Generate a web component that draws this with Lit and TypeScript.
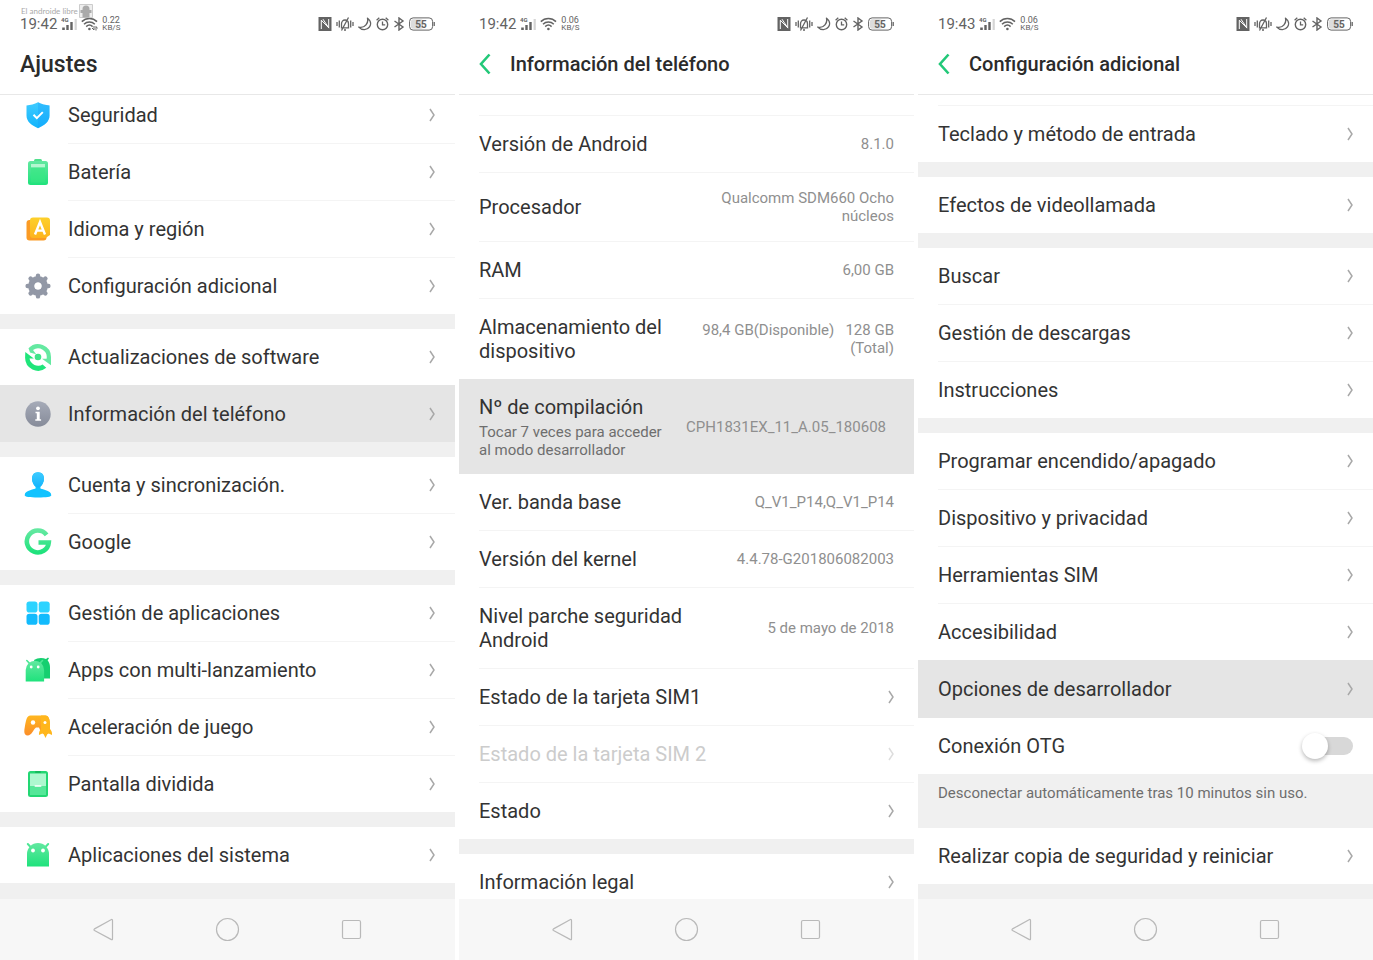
import { LitElement, html, svg, css, nothing } from "lit";
import { customElement, property } from "lit/decorators.js";
import { classMap } from "lit/directives/class-map.js";

type Row = {
  label: string;
  icon?: string;
  value?: string;
  note?: string;
  active?: boolean;
  disabled?: boolean;
  toggle?: boolean;
  inset?: boolean;
};

const settings: Row[][] = [
  [
    { label: "Seguridad", icon: "shield" },
    { label: "Batería", icon: "battery" },
    { label: "Idioma y región", icon: "language" },
    { label: "Configuración adicional", icon: "gear" },
  ],
  [
    { label: "Actualizaciones de software", icon: "update" },
    { label: "Información del teléfono", icon: "info", active: true },
  ],
  [
    { label: "Cuenta y sincronización.", icon: "person" },
    { label: "Google", icon: "google" },
  ],
  [
    { label: "Gestión de aplicaciones", icon: "apps" },
    { label: "Apps con multi-lanzamiento", icon: "clones" },
    { label: "Aceleración de juego", icon: "game" },
    { label: "Pantalla dividida", icon: "split" },
  ],
  [{ label: "Aplicaciones del sistema", icon: "android" }],
];

const phoneInfo: Row[][] = [
  [
    { label: "Versión de Android", value: "8.1.0" },
    { label: "Procesador", value: "Qualcomm SDM660 Ocho núcleos" },
    { label: "RAM", value: "6,00 GB" },
    {
      label: "Almacenamiento del dispositivo",
      value: "98,4 GB(Disponible)\u00a0\u00a0 128\u00a0GB (Total)",
    },
    {
      label: "Nº de compilación",
      note: "Tocar 7 veces para acceder al modo desarrollador",
      value: "CPH1831EX_11_A.05_180608",
      active: true,
      inset: true,
    },
    { label: "Ver. banda base", value: "Q_V1_P14,Q_V1_P14" },
    { label: "Versión del kernel", value: "4.4.78-G201806082003" },
    { label: "Nivel parche seguridad Android", value: "5 de mayo de 2018" },
    { label: "Estado de la tarjeta SIM1" },
    { label: "Estado de la tarjeta SIM 2", disabled: true },
    { label: "Estado" },
  ],
  [{ label: "Información legal" }],
];

const extraTop: Row[][] = [
  [{ label: "Teclado y método de entrada" }],
  [{ label: "Efectos de videollamada" }],
  [
    { label: "Buscar" },
    { label: "Gestión de descargas" },
    { label: "Instrucciones" },
  ],
  [
    { label: "Programar encendido/apagado" },
    { label: "Dispositivo y privacidad" },
    { label: "Herramientas SIM" },
    { label: "Accesibilidad" },
    { label: "Opciones de desarrollador", active: true },
    { label: "Conexión OTG", toggle: true },
  ],
];

const extraBottom: Row[][] = [[{ label: "Realizar copia de seguridad y reiniciar" }]];

const icons: Record<string, unknown> = {
  shield: svg`
    <path d="M14 1.200c3.600 2 7.400 2.900 11.500 3.200v10.200c0 6-4.800 9.800-11.500 12.600C7.300 24.400 2.500 20.600 2.500 14.600V4.400C6.600 4.100 10.400 3.200 14 1.200z" fill="url(#blue)"/>
    <path d="M14 1.200c3.600 2 7.400 2.900 11.500 3.200v10.200c0 6-4.800 9.800-11.500 12.600z" fill="#18a0fb" opacity=".35"/>
    <path d="M9.500 13.800l3.300 3.300 6-6" fill="none" stroke="#fff" stroke-width="2"/>`,
  battery: svg`
    <rect x="10" y="1" width="8" height="5" rx="1.500" fill="#4fe08c"/>
    <rect x="4" y="3" width="20" height="24" rx="2.500" fill="url(#green)"/>
    <rect x="7" y="6" width="14" height="3.500" fill="#b4f7d0"/>
    <rect x="7" y="9.500" width="14" height="15" fill="#3ae884" opacity=".55"/>`,
  language: svg`
    <rect x="2.500" y="5" width="20" height="20.500" rx="3" fill="#fb9b24"/>
    <path d="M9 2.500h14a3 3 0 0 1 3 3V20l-4.500 3H9a3 3 0 0 1-3-3V5.500a3 3 0 0 1 3-3z" fill="url(#yellow)"/>
    <path d="M11 19.500l5-12.500 5 12.500M12.800 15.600h6.400" fill="none" stroke="#fff" stroke-width="2.400"/>`,
  gear: svg`
    <circle cx="14" cy="14" r="6.700" fill="none" stroke="#9298a6" stroke-width="6.400"/>
    <path d="M14 3.600v4M14 20.400v4M3.600 14h4M20.400 14h4M6.600 6.600l3 3M18.400 18.400l3 3M21.400 6.600l-3 3M9.600 18.400l-3 3" stroke="#9298a6" stroke-width="4.400" stroke-linecap="round"/>
    <circle cx="14" cy="14" r="3.500" fill="#fff"/>`,
  update: svg`
    <circle cx="14" cy="14" r="3.300" fill="#3fe48a"/>
    <path d="M4.500 5.200A13 13 0 0 1 27 14v8.300l-9-6.600h4.600A8.700 8.700 0 0 0 9 7.100l3.200 4.200L6 9.600z" fill="#64e9a1"/>
    <path d="M1.300 9L9.800 15.500H5.500A8.700 8.700 0 0 0 18.600 21.400l3.700 3.400A13 13 0 0 1 1.100 14.500z" fill="#1fe57a"/>`,
  info: svg`
    <circle cx="14" cy="14" r="12.700" fill="url(#gray)"/>
    <circle cx="14" cy="8.300" r="1.900" fill="#fff"/>
    <path d="M11.500 11.700h4.200v7.600h1.400v1.500h-5.800v-1.500h1.500v-6h-1.300z" fill="#fff"/>`,
  person: svg`
    <path d="M14 1.200c4 0 6 2.800 6 6.400 0 3.600-1.900 7-3.600 8.200v1.500c0 1.200 10.900 1.500 10.900 6.900 0 1.600-5 2.200-13.300 2.200S.7 25.800.7 24.200c0-5.400 10.900-5.700 10.900-6.900v-1.500C9.900 14.600 8 11.200 8 7.600c0-3.600 2-6.400 6-6.400z" fill="#12c3ff"/>
    <path d="M14 1.200c4 0 6 2.800 6 6.400 0 4.600-3.200 9-6 9s-6-4.400-6-9c0-3.600 2-6.400 6-6.400z" fill="url(#blue)"/>`,
  google: svg`
    <path d="M22.600 6.800A11 11 0 1 0 24.800 14.500H14.500" fill="none" stroke="url(#green)" stroke-width="4.600"/>`,
  apps: svg`
    <rect x="2.500" y="2.500" width="11" height="11" rx="2.800" fill="#2cd3ff"/>
    <rect x="14.700" y="2.500" width="11" height="11" rx="2.800" fill="#2cd3ff"/>
    <rect x="2.500" y="14.700" width="11" height="11" rx="2.800" fill="#12bbfd"/>
    <rect x="14.700" y="14.700" width="11" height="11" rx="2.800" fill="#12bbfd"/>`,
  clones: svg`
    <path d="M10 4c2-1.300 4.500-2 7-2 1.800 0 3.500.3 5 1l2-1.500 1 1-1.400 1.800C25 6 26 8.500 26 11v11.500H14z" fill="#16cf70"/>
    <path d="M2.800 4.500l2.500 2.600M18.500 4.500L16 7.100" stroke="#4de795" stroke-width="1.600" stroke-linecap="round"/>
    <path d="M1.700 25.500V14a9.200 9.200 0 0 1 18.400 0v11.500z" fill="url(#green)"/>
    <circle cx="7.200" cy="11" r="1.400" fill="#fff"/><circle cx="14.200" cy="11" r="1.400" fill="#fff"/>`,
  game: svg`
    <path d="M6.500 2.500h15c3 0 4 3 4.500 8v9H17l-2-5h-3c-3 2.500-4.500 8-8.200 8C0 22.500-.2 19 .8 14 1.900 8 2.500 2.500 6.500 2.500z" fill="url(#orange)"/>
    <path d="M17 2.500h4.500c3 0 4.500 4 4.500 9v4.500c1.500 1.500 2.200 3.500 2 6l-3.200-1.500-1.500.8-1.800 3.700-1.800-3.700-1.500-.8-3.200 1.500c-.2-2.500.5-4.500 2-6z" fill="#ffb61c"/>
    <circle cx="9" cy="9.500" r="2.200" fill="#fff"/><circle cx="21" cy="9.500" r="1.500" fill="#fff"/>`,
  split: svg`
    <rect x="4" y="1" width="20" height="26" rx="2.500" fill="#22d773"/>
    <rect x="6" y="3.500" width="16" height="12.500" fill="#adf8cf"/>
    <rect x="6" y="16" width="16" height="9" fill="#55e798"/>
    <rect x="10.500" y="15.300" width="7" height="1.400" rx=".7" fill="#fff"/>
    <rect x="11" y="1" width="6" height="2" rx="1" fill="#16b95e"/>`,
  android: svg`
    <path d="M3.800 3l3 3.200M24.200 3l-3 3.200" stroke="#4de795" stroke-width="2" stroke-linecap="round"/>
    <path d="M3 25.500V13a11 11 0 0 1 22 0v12.500z" fill="url(#green)"/>
    <circle cx="9" cy="9.500" r="1.900" fill="#fff"/><circle cx="19" cy="9.500" r="1.900" fill="#fff"/>`,
};

const gradient = (id: string, from: string, to: string) => svg`
  <linearGradient id=${id} x1="0" y1="0" x2="0" y2="1">
    <stop offset="0" stop-color=${from}/><stop offset="1" stop-color=${to}/>
  </linearGradient>`;

const rowIcon = (name: string) => html`
  <svg class="icon" viewBox="0 0 28 28" aria-hidden="true">
    <defs>
      ${gradient("blue", "#3fcbff", "#12b4fc")}
      ${gradient("green", "#62e8a0", "#1fe27c")}
      ${gradient("yellow", "#fdd02a", "#fdb41e")}
      ${gradient("orange", "#ffb71f", "#fb8d2a")}
      ${gradient("gray", "#a6abb8", "#868b99")}
    </defs>
    ${icons[name]}
  </svg>`;

@customElement("status-bar")
class StatusBar extends LitElement {
  @property() time = "";
  @property() speed = "";
  @property({ type: Boolean }) transfer = false;

  static styles = css`
    :host {
      display: flex;
      justify-content: space-between;
      align-items: center;
      height: 20px;
      padding: 14px 20px 0;
      color: #636363;
    }
    .side {
      display: flex;
      align-items: center;
      gap: 4px;
    }
    .time {
      font-size: 15px;
      line-height: 20px;
    }
    .speed {
      font-size: 8px;
      line-height: 7px;
    }
    .speed span {
      display: block;
    }
    .rate {
      font-size: 9px;
    }
    svg {
      display: block;
      fill: none;
      stroke: currentColor;
    }
    text {
      fill: currentColor;
      stroke: none;
      font-weight: 700;
    }
  `;

  render() {
    return html`
      <div class="side">
        <span class="time">${this.time}</span>
        <svg width="16" height="14" viewBox="0 0 16 14">
          <text x="0" y="5" font-size="6">4G</text>
          <path d="M2.500 10.500v2.500" stroke-width="2.600" />
          <path d="M6.500 8v5M10.500 5v8" stroke-width="2.400" />
          <path d="M14.700 2v11" stroke="#d5d5d5" stroke-width="2.200" />
        </svg>
        <svg width="17" height="14" viewBox="0 0 17 14">
          <path d="M.8 4.600c4.200-4.200 11-4.200 15.200 0M3 7.200c3-3 7.800-3 10.800 0M5.200 9.600c1.900-1.800 4.600-1.800 6.400 0" stroke-width="1.500" />
          <circle cx="8.400" cy="12" r="1.300" fill="currentColor" stroke="none" />
          ${this.transfer
            ? svg`<path d="M13 9v4l-2-2M15 13.500v-4l1.700 2" stroke-width="1"/>`
            : nothing}
        </svg>
        <div class="speed"><span class="rate">${this.speed}</span><span>KB/S</span></div>
      </div>
      <div class="side">
        <svg width="14" height="14" viewBox="0 0 14 14">
          <path d="M.5 0h13v14H.5z" fill="currentColor" stroke="none" />
          <path d="M3.300 12V3.200L7 7M10.700 2v8.800L7 7M5 2.200l6 9" stroke="#fff" stroke-width="1" />
        </svg>
        <svg width="18" height="14" viewBox="0 0 18 14">
          <path d="M1 5v4M3.300 3.500v7M14.700 3.500v7M17 5v4" stroke-width="1.300" />
          <path d="M5.500 10.800V7c0-2.500 1.400-4 3.500-4s3.500 1.500 3.500 4v3.800zM8 13h2M12.500.5l-7 13" stroke-width="1.300" />
        </svg>
        <svg width="14" height="14" viewBox="0 0 14 14">
          <path d="M9.500 1.200c3 2.200 4 5.800 2 8.700-2.400 3.500-7.500 3.800-10.700.2 2.700.6 5.500-.2 7.200-2.200 1.600-1.900 2.100-4.300 1.500-6.700z" stroke-width="1.400" stroke-linejoin="round" />
        </svg>
        <svg width="13" height="14" viewBox="0 0 13 14">
          <circle cx="6.500" cy="7.500" r="5.200" stroke-width="1.400" />
          <path d="M6.500 4.500v3.400h2.700M.6 3.300L3.300.8M12.400 3.300L9.700.8" stroke-width="1.300" />
        </svg>
        <svg width="12" height="14" viewBox="0 0 12 14">
          <path d="M1.500 4l8.500 6-4 3V1l4 3-8.500 6" stroke-width="1.400" />
        </svg>
        <svg width="26" height="14" viewBox="0 0 26 14">
          <rect x=".6" y=".9" width="23" height="12.200" rx="3.500" stroke-width="1" />
          <rect x="2" y="2.300" width="12" height="9.400" rx="2" fill="#dcdcdc" stroke="none" />
          <path d="M25.200 5v4" stroke-width="1.300" />
          <text x="12" y="10.700" font-size="10" text-anchor="middle">55</text>
        </svg>
      </div>
    `;
  }
}

@customElement("nav-bar")
class NavBar extends LitElement {
  static styles = css`
    :host {
      display: flex;
      justify-content: center;
      align-items: center;
      gap: 96px;
      height: 61px;
      background: #f7f7f7;
      flex: none;
    }
    button {
      display: block;
      padding: 0;
      border: 0;
      background: none;
    }
    svg {
      display: block;
      fill: none;
      stroke: #b9b9b9;
      stroke-width: 1.200;
      stroke-linejoin: round;
    }
  `;

  render() {
    const shapes: [string, unknown][] = [
      ["Atrás", svg`<path d="M22.500 4.500v18.500q0 1-1 .600L4.500 14.500q-1-.8 0-1.600L21.500 3.500q1-.4 1 1z"/>`],
      ["Inicio", svg`<circle cx="13.500" cy="13.500" r="11"/>`],
      ["Recientes", svg`<rect x="4.500" y="4.500" width="18" height="18" rx="1.500"/>`],
    ];
    return shapes.map(
      ([name, shape]) => html`<button aria-label=${name}>
        <svg width="28" height="28" viewBox="0 0 28 28">${shape}</svg>
      </button>`
    );
  }
}

@customElement("app-root")
class AppRoot extends LitElement {
  static styles = css`
    :host {
      display: grid;
      grid-template-columns: repeat(3, minmax(0, 1fr));
      gap: 4px;
      height: 100vh;
      background: #fff;
      color: #333;
      font-family: Roboto, "Liberation Sans", sans-serif;
    }
    .phone {
      position: relative;
      display: flex;
      flex-direction: column;
      min-height: 0;
    }
    .watermark {
      position: absolute;
      left: 21px;
      top: 4px;
      display: flex;
      gap: 1px;
      font: 8px/14px Lato, sans-serif;
      color: #aaa;
    }
    .title {
      display: flex;
      align-items: center;
      gap: 19px;
      height: 60px;
      padding: 0 20px;
      border-bottom: 1px solid #e8e8e8;
    }
    h1,
    h2 {
      margin: 0;
      font-weight: 500;
      line-height: 28px;
      color: #2b2b2b;
    }
    h1 {
      font-size: 23px;
      padding-top: 2px;
    }
    h2 {
      font-size: 20px;
    }
    .back {
      padding: 0;
      border: 0;
      background: none;
    }
    .back svg {
      display: block;
      fill: none;
      stroke: #22c878;
      stroke-width: 2.600;
    }
    .list {
      flex: 1;
      min-height: 0;
      overflow: hidden;
      background: #f0f0f0;
    }
    .groups {
      display: flex;
      flex-direction: column;
      gap: 15px;
    }
    .scrolled {
      margin-top: -8px;
    }
    .group {
      background: #fff;
    }
    .lead-large {
      padding-top: 20px;
    }
    .lead-small {
      padding-top: 10px;
    }
    .lead-large,
    .lead-small {
      background: #fff;
    }
    .row {
      display: flex;
      align-items: center;
      gap: 16px;
      padding: 0 20px;
      color: inherit;
      text-decoration: none;
    }
    .active {
      background: #e5e5e5;
    }
    .divider {
      height: 1px;
      margin: 0 0 0 20px;
      border: 0;
      background: #f4f4f4;
    }
    .with-icons .divider {
      margin-left: 68px;
    }
    .with-icons .row {
      padding-left: 24px;
    }
    .group .flush {
      margin-left: 0;
      background: #e5e5e5;
    }
    .icon {
      width: 28px;
      height: 28px;
      flex: none;
    }
    .text {
      flex: 1;
      padding: 16px 0;
    }
    .inset .text {
      padding-bottom: 15px;
    }
    .label {
      display: block;
      font-size: 20px;
      line-height: 24px;
    }
    .note {
      display: block;
      margin-top: 4px;
      font-size: 15px;
      line-height: 18px;
      color: #6e6e6e;
    }
    .value {
      max-width: 200px;
      padding: 16px 0;
      font-size: 15px;
      line-height: 18px;
      text-align: right;
      color: #8f8f8f;
    }
    .inset .value {
      margin-right: 8px;
    }
    .disabled {
      color: #ccc;
    }
    .chevron {
      width: 6px;
      height: 14px;
      flex: none;
      fill: none;
      stroke: #a8a8a8;
      stroke-width: 1.500;
    }
    .disabled .chevron {
      stroke: #ddd;
    }
    .switch {
      appearance: none;
      position: relative;
      width: 46px;
      height: 18px;
      margin: 0;
      border-radius: 9px;
      background: #d8d8d8;
    }
    .switch::before {
      content: "";
      position: absolute;
      left: -5px;
      top: -4px;
      width: 26px;
      height: 26px;
      border-radius: 50%;
      background: #fff;
      box-shadow: 0 2px 4px rgba(0, 0, 0, 0.28);
    }
    .footnote {
      margin: 0;
      padding: 10px 20px 26px;
      font-size: 15px;
      line-height: 18px;
      color: #6e6e6e;
    }
  `;

  private row(r: Row) {
    const cls = classMap({
      row: true,
      active: !!r.active,
      disabled: !!r.disabled,
      inset: !!r.inset,
    });
    const text = html`<span class="text">
      <span class="label">${r.label}</span>
      ${r.note ? html`<span class="note">${r.note}</span>` : nothing}
    </span>`;
    if (r.toggle) {
      return html`<label class=${cls}>${text}<input class="switch" type="checkbox" role="switch" /></label>`;
    }
    if (r.value) {
      return html`<div class=${cls}>${text}<span class="value">${r.value}</span></div>`;
    }
    return html`<a class=${cls} href="#" aria-disabled=${r.disabled ? "true" : "false"}>
      ${r.icon ? rowIcon(r.icon) : nothing}${text}
      <svg class="chevron" viewBox="0 0 6 14" aria-hidden="true"><path d="M1 1l4 6-4 6" /></svg>
    </a>`;
  }

  private groups(list: Row[][]) {
    return list.map(
      (rows) => html`<section class="group">
        ${rows.map((r, i) => {
          const touchesInset = r.inset || rows[i - 1]?.inset;
          const divider =
            i === 0 || touchesInset
              ? nothing
              : html`<hr class=${classMap({ divider: true, flush: !!(r.active || rows[i - 1].active) })} />`;
          return html`${divider}${this.row(r)}`;
        })}
      </section>`
    );
  }

  private backTitle(text: string) {
    return html`<header class="title">
      <button class="back" aria-label="Atrás">
        <svg width="12" height="22" viewBox="0 0 12 22"><path d="M10.500 1.500L2 11l8.500 9.500" /></svg>
      </button>
      <h2>${text}</h2>
    </header>`;
  }

  render() {
    return html`
      <main class="phone">
        <div class="watermark">
          El androide libre
          <svg width="14" height="14" viewBox="0 0 14 14" aria-hidden="true">
            <path d="M.5.500h13v13H.5z" fill="#eee" stroke="#ccc" />
            <path d="M3.500 5a3.500 3.500 0 0 1 7 0v1h2v3h-2v4.500h-7V9h-2V6h2z" fill="#aaa" />
          </svg>
        </div>
        <status-bar time="19:42" speed="0.22" transfer></status-bar>
        <header class="title"><h1>Ajustes</h1></header>
        <div class="list">
          <div class="groups scrolled with-icons">${this.groups(settings)}</div>
        </div>
        <nav-bar></nav-bar>
      </main>
      <main class="phone">
        <status-bar time="19:42" speed="0.06"></status-bar>
        ${this.backTitle("Información del teléfono")}
        <div class="list">
          <div class="lead-large"><hr class="divider" /></div>
          <div class="groups">${this.groups(phoneInfo)}</div>
        </div>
        <nav-bar></nav-bar>
      </main>
      <main class="phone">
        <status-bar time="19:43" speed="0.06"></status-bar>
        ${this.backTitle("Configuración adicional")}
        <div class="list">
          <div class="lead-small"><hr class="divider" /></div>
          <div class="groups">${this.groups(extraTop)}</div>
          <p class="footnote">Desconectar automáticamente tras 10 minutos sin uso.</p>
          <div class="groups">${this.groups(extraBottom)}</div>
        </div>
        <nav-bar></nav-bar>
      </main>
    `;
  }
}
